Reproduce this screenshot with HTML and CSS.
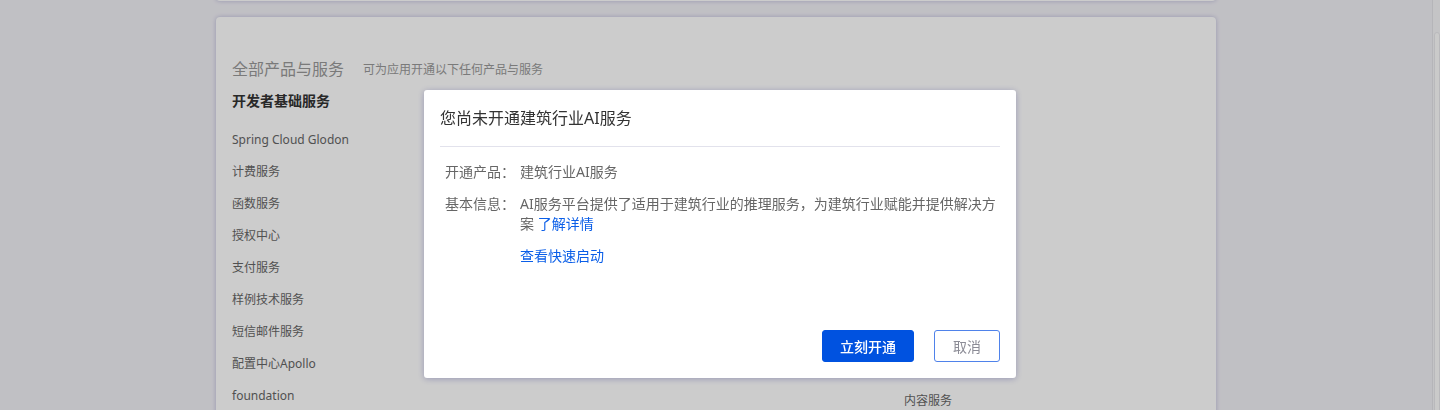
FILE: index.html
```html
<!DOCTYPE html>
<html lang="zh-CN">
<head>
<meta charset="utf-8">
<title>全部产品与服务</title>
<link rel="stylesheet" href="styles.css">
</head>
<body>
<div class="layout">
  <main class="page">
    <div class="card card-top"></div>
    <section class="card card-products">
      <div class="products-header">
        <h2 class="products-title">全部产品与服务</h2>
        <span class="products-sub">可为应用开通以下任何产品与服务</span>
      </div>
      <div class="columns">
        <div class="column">
          <h3 class="group-title">开发者基础服务</h3>
          <ul class="group-list">
            <li>Spring Cloud Glodon</li>
            <li>计费服务</li>
            <li>函数服务</li>
            <li>授权中心</li>
            <li>支付服务</li>
            <li>样例技术服务</li>
            <li>短信邮件服务</li>
            <li>配置中心Apollo</li>
            <li>foundation</li>
          </ul>
        </div>
        <div class="column"></div>
        <div class="column column-right">
          <ul class="group-list">
            <li>内容服务</li>
          </ul>
        </div>
      </div>
    </section>
  </main>
  <div class="scrollbar"><div class="thumb"></div></div>
</div>

<div class="mask"></div>

<div class="modal">
  <div class="modal-header">您尚未开通建筑行业AI服务</div>
  <div class="modal-body">
    <div class="row">
      <div class="label">开通产品：</div>
      <div class="value">建筑行业AI服务</div>
    </div>
    <div class="row">
      <div class="label">基本信息：</div>
      <div class="value">AI服务平台提供了适用于建筑行业的推理服务，为建筑行业赋能并提供解决方案 <a class="link" href="#">了解详情</a></div>
    </div>
    <div class="row">
      <div class="label"></div>
      <div class="value"><a class="link" href="#">查看快速启动</a></div>
    </div>
  </div>
  <div class="modal-footer">
    <button class="btn btn-primary">立刻开通</button>
    <button class="btn btn-default">取消</button>
  </div>
</div>
</body>
</html>
```

FILE: styles.css
```css
* { box-sizing: border-box; }

html, body {
  margin: 0;
  padding: 0;
  height: 100%;
  overflow: hidden;
}

body {
  background: #f1f0f6;
  font-family: "Noto Sans", "Noto Sans CJK SC", sans-serif;
  color: #333;
}

.layout {
  display: flex;
  height: 410px;
  overflow: hidden;
}

.page {
  flex: 1;
  display: flex;
  flex-direction: column;
  align-items: center;
  gap: 16px;
  overflow: hidden;
}

.card {
  width: 1000px;
  background: #fff;
  border-radius: 4px;
  box-shadow: 0 0 4px rgba(90, 90, 170, 0.35);
  flex-shrink: 0;
}

.card-top {
  height: 60px;
  margin-top: -59px;
}

.card-products {
  padding: 40px 16px 0;
  height: 600px;
}

.products-header {
  display: flex;
  align-items: center;
  height: 24px;
}

.products-title {
  margin: 0;
  font-size: 16px;
  font-weight: normal;
  color: #999;
  line-height: 24px;
}

.products-sub {
  margin-left: 19px;
  font-size: 12px;
  color: #999;
  line-height: 24px;
  padding-top: 2px;
}

.columns {
  display: grid;
  grid-template-columns: 336px 336px 1fr;
}

.group-title {
  margin: 10px 0 0;
  font-size: 14px;
  font-weight: bold;
  line-height: 20px;
  color: #333;
}

.group-list {
  list-style: none;
  margin: 13px 0 0;
  padding: 0;
}

.group-list li {
  height: 32px;
  line-height: 32px;
  font-size: 12px;
  color: #666;
}

.column-right .group-list {
  margin-top: 304px;
}

.scrollbar {
  width: 8px;
  background: #f6f6f8;
  border-left: 1px solid #e3e3e8;
  padding-top: 32px;
}

.thumb {
  width: 6px;
  height: 500px;
  margin-left: 1px;
  background: #fdfdfd;
  border: 1px solid #e8e8ec;
  border-radius: 4px;
}

.mask {
  position: fixed;
  inset: 0;
  background: rgba(0, 0, 0, 0.2);
}

.modal {
  position: fixed;
  top: 90px;
  left: 424px;
  width: 592px;
  height: 288px;
  background: #fff;
  border-radius: 3px;
  box-shadow: 0 1px 6px rgba(60, 60, 140, 0.35);
  padding: 0 16px 16px;
  display: flex;
  flex-direction: column;
}

.modal-header {
  padding: 16px 0;
  line-height: 24px;
  font-size: 16px;
  color: #333;
  border-bottom: 1px solid #e2e2ec;
}

.modal-body {
  padding-top: 15px;
  flex: 1;
}

.row {
  display: flex;
  font-size: 14px;
  line-height: 20px;
  margin-bottom: 12px;
}

.label {
  width: 80px;
  flex-shrink: 0;
  padding-left: 5px;
  color: #666;
}

.value {
  flex: 1;
  color: #666;
}

.link {
  color: #0a5ee8;
  text-decoration: none;
}

.modal-footer {
  display: flex;
  justify-content: flex-end;
  gap: 20px;
}

.btn {
  height: 32px;
  font-family: inherit;
  font-size: 14px;
  border-radius: 3px;
  cursor: pointer;
}

.btn-primary {
  width: 92px;
  background: #0052e0;
  border: 1px solid #0052e0;
  color: #fff;
  font-weight: 500;
}

.btn-default {
  width: 66px;
  background: #fff;
  border: 1px solid #4f82ea;
  color: #8c8c96;
}
```
